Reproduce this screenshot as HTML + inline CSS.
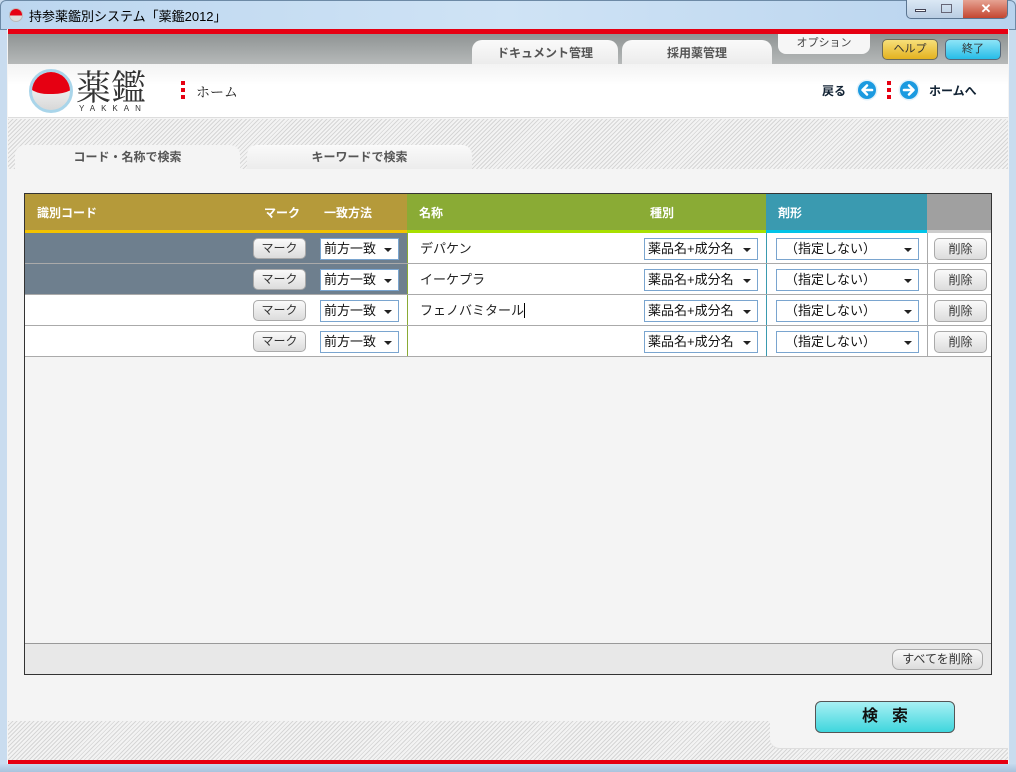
<!DOCTYPE html>
<html><head><meta charset="utf-8"><style>
*{margin:0;padding:0;box-sizing:border-box}
body{width:1016px;height:772px;position:relative;overflow:hidden;font-family:"Liberation Sans","Noto Sans CJK JP",sans-serif;background:#c9dcef}
.a{position:absolute}
.hatch{background:repeating-linear-gradient(135deg,#d6d6d6 0 1px,#f3f3f3 1px 3px)}
.tab{position:absolute;background:linear-gradient(#fafafa,#ececec);border-radius:10px 10px 0 0;font-size:12px;font-weight:bold;color:#555;text-align:center}
.btn{position:absolute;border:1px solid #aaa;border-radius:5px;background:linear-gradient(#fafafa,#dcdcdc);font-size:12px;color:#333;text-align:center}
.sel{position:absolute;background:#fff;border:1px solid #7aa5cf;font-size:13px;color:#111;padding-left:3px;line-height:20px}
.sel:after{content:"";position:absolute;right:6px;top:9px;border:4px solid transparent;border-top:4px solid #222;border-bottom:0}
.hd{position:absolute;top:0;height:36px;color:#fff;font-size:12px;font-weight:bold;line-height:38px}
.row{position:absolute;left:0;width:966px;height:31px;border-bottom:1px solid #aaa}
.nm{position:absolute;left:395px;font-size:13px;color:#222;line-height:30px}
</style></head><body>
<div class="a" style="left:0;top:0;width:1016px;height:30px;background:linear-gradient(90deg,#bcd6ef,#cfe3f5 50%,#b8d3ee);border-radius:6px 6px 0 0;border:1px solid #6d8aa6"></div>
<div class="a" style="left:9px;top:8px;width:14px;height:14px;border-radius:50%;background:linear-gradient(#e60012 55%,#ddd 55%);border:1px solid #bbb"></div>
<div class="a" style="left:29px;top:6px;font-size:13px;color:#000">持参薬鑑別システム「薬鑑2012」</div>
<div class="a" style="left:906px;top:0;width:102px;height:19px;border:1px solid #5b7591;border-top:0;border-radius:0 0 5px 5px;background:linear-gradient(#dbe8f5,#b9cde3);overflow:hidden">
 <div class="a" style="left:8px;top:9px;width:11px;height:3px;background:#fff;border:1px solid #445"></div>
 <div class="a" style="left:34px;top:4px;width:11px;height:9px;border:1px solid #667"></div>
 <div class="a" style="left:56px;top:0;width:46px;height:19px;background:linear-gradient(#e6a393,#c2412b);color:#fff;font-weight:bold;font-size:13px;text-align:center;line-height:18px">✕</div>
</div>
<div class="a" style="left:7px;top:29px;width:1002px;height:737px;background:#f4f4f4"></div>
<div class="a" style="left:8px;top:29px;width:1000px;height:5px;background:#e60012"></div>
<div class="a" style="left:8px;top:34px;width:1000px;height:30px;background:linear-gradient(#8f9494,#b6b9b9)"></div>
<div class="tab" style="left:472px;top:40px;width:146px;height:24px;line-height:26px">ドキュメント管理</div>
<div class="tab" style="left:622px;top:40px;width:150px;height:24px;line-height:26px">採用薬管理</div>
<div class="a" style="left:778px;top:34px;width:92px;height:20px;background:#f6f6f6;border-radius:0 0 8px 8px;font-size:11px;color:#444;text-align:center;line-height:18px">オプション</div>
<div class="a" style="left:882px;top:39px;width:56px;height:21px;border:1px solid #6b6b5a;border-radius:5px;background:linear-gradient(#f7df7a,#e4b220);font-size:11px;text-align:center;line-height:19px;color:#333">ヘルプ</div>
<div class="a" style="left:945px;top:39px;width:56px;height:21px;border:1px solid #56677a;border-radius:5px;background:linear-gradient(#8ee4f7,#27bde8);font-size:11px;text-align:center;line-height:19px;color:#333">終了</div>
<div class="a" style="left:8px;top:64px;width:1000px;height:54px;background:linear-gradient(#f3f3f3,#fff 40%);border-bottom:1px solid #ddd"></div>
<div class="a" style="left:29px;top:69px;width:44px;height:44px;border-radius:50%;border:3px solid #a9d5ea;overflow:hidden;background:linear-gradient(#fff,#d8d8d8)"><div class="a" style="left:-4px;top:-4px;width:50px;height:26px;background:#e60012;border-radius:0 0 50% 40%"></div></div>
<div class="a" style="left:76px;top:66px;font-family:'Noto Serif CJK SC',serif;font-size:35px;line-height:40px;color:#333">薬鑑</div>
<div class="a" style="left:79px;top:104px;font-size:8px;letter-spacing:6px;color:#333">YAKKAN</div>
<div class="a" style="left:181px;top:81px;width:4px;height:18px;background:repeating-linear-gradient(#e60012 0 4px,transparent 4px 7px)"></div>
<div class="a" style="left:196px;top:82px;font-size:14px;color:#222;font-family:'Noto Serif CJK SC',serif">ホーム</div>
<div class="a" style="left:822px;top:82px;font-size:12px;font-weight:bold;color:#123">戻る</div>
<svg class="a" style="left:856px;top:79px" width="22" height="22" viewBox="0 0 22 22"><circle cx="11" cy="11" r="10.5" fill="#e2f1fa"/><circle cx="11" cy="11" r="9" fill="#1b9ae0"/><path d="M16 11H7M11 6.5L6.5 11L11 15.5" stroke="#fff" stroke-width="2.6" fill="none" stroke-linecap="round" stroke-linejoin="round"/></svg>
<div class="a" style="left:887px;top:81px;width:4px;height:18px;background:repeating-linear-gradient(#e60012 0 4px,transparent 4px 7px)"></div>
<svg class="a" style="left:898px;top:79px" width="22" height="22" viewBox="0 0 22 22"><circle cx="11" cy="11" r="10.5" fill="#e2f1fa"/><circle cx="11" cy="11" r="9" fill="#1b9ae0"/><path d="M6 11H15M11 6.5L15.5 11L11 15.5" stroke="#fff" stroke-width="2.6" fill="none" stroke-linecap="round" stroke-linejoin="round"/></svg>
<div class="a" style="left:929px;top:82px;font-size:12px;font-weight:bold;color:#123">ホームへ</div>
<div class="a hatch" style="left:8px;top:119px;width:1000px;height:50px"></div>
<div class="tab" style="left:15px;top:145px;width:225px;height:26px;line-height:24px;background:#f4f4f4">コード・名称で検索</div>
<div class="tab" style="left:247px;top:145px;width:225px;height:24px;line-height:24px">キーワードで検索</div>
<div class="a hatch" style="left:8px;top:721px;width:1000px;height:39px"></div>
<div class="a" style="left:770px;top:700px;width:238px;height:49px;background:#f4f4f4;border-radius:0 0 0 10px;border-bottom:1px solid #ddd"></div>
<div class="a" style="left:8px;top:760px;width:1000px;height:4px;background:#e60012"></div>
<div class="a" style="left:0;top:764px;width:1016px;height:8px;background:linear-gradient(#c5daee,#a9c3dd)"></div>
<div class="a" style="left:24px;top:193px;width:968px;height:482px;border:1px solid #333;background:#f4f4f4">
 <div class="hd" style="left:0;width:382px;background:#b59a3a;border-bottom:3px solid #f2c200;height:39px"><span class="a" style="left:12px">識別コード</span><span class="a" style="left:239px">マーク</span><span class="a" style="left:299px">一致方法</span></div>
 <div class="hd" style="left:382px;width:359px;background:#8aab35;border-bottom:3px solid #a8e000;height:39px"><span class="a" style="left:12px">名称</span><span class="a" style="left:243px">種別</span></div>
 <div class="hd" style="left:741px;width:161px;background:#3a9ab0;border-bottom:3px solid #00c4e8;height:39px"><span class="a" style="left:12px">剤形</span></div>
 <div class="hd" style="left:902px;width:64px;background:#a0a0a0;border-bottom:3px solid #ccc;height:39px"></div>
 <div class="a" style="left:0;top:39px;width:966px;height:124px;background:#fff"></div>
 <div class="a" style="left:0;top:39px;width:382px;height:62px;background:#6e7f8e"></div>
 <div class="a" style="left:382px;top:39px;width:1px;height:124px;background:#8aab35"></div>
 <div class="a" style="left:741px;top:39px;width:1px;height:124px;background:#3a9ab0"></div>
 <div class="a" style="left:902px;top:39px;width:1px;height:124px;background:#aaa"></div>
 <div class="row" style="top:39px"></div><div class="row" style="top:70px"></div><div class="row" style="top:101px"></div><div class="row" style="top:132px"></div>
 <div class="btn" style="left:228px;top:44px;width:53px;height:21px;line-height:19px">マーク</div>
 <div class="btn" style="left:228px;top:75px;width:53px;height:21px;line-height:19px">マーク</div>
 <div class="btn" style="left:228px;top:106px;width:53px;height:21px;line-height:19px">マーク</div>
 <div class="btn" style="left:228px;top:137px;width:53px;height:21px;line-height:19px">マーク</div>
 <div class="sel" style="left:295px;top:44px;width:79px;height:22px">前方一致</div>
 <div class="sel" style="left:295px;top:75px;width:79px;height:22px">前方一致</div>
 <div class="sel" style="left:295px;top:106px;width:79px;height:22px">前方一致</div>
 <div class="sel" style="left:295px;top:137px;width:79px;height:22px">前方一致</div>
 <div class="nm" style="top:40px">デパケン</div>
 <div class="nm" style="top:71px">イーケプラ</div>
 <div class="nm" style="top:102px">フェノバミタール<span style="border-right:1px solid #000"></span></div>
 <div class="sel" style="left:619px;top:44px;width:114px;height:22px">薬品名+成分名</div>
 <div class="sel" style="left:619px;top:75px;width:114px;height:22px">薬品名+成分名</div>
 <div class="sel" style="left:619px;top:106px;width:114px;height:22px">薬品名+成分名</div>
 <div class="sel" style="left:619px;top:137px;width:114px;height:22px">薬品名+成分名</div>
 <div class="sel" style="left:751px;top:44px;width:143px;height:22px;padding-left:8px">（指定しない）</div>
 <div class="sel" style="left:751px;top:75px;width:143px;height:22px;padding-left:8px">（指定しない）</div>
 <div class="sel" style="left:751px;top:106px;width:143px;height:22px;padding-left:8px">（指定しない）</div>
 <div class="sel" style="left:751px;top:137px;width:143px;height:22px;padding-left:8px">（指定しない）</div>
 <div class="btn" style="left:909px;top:44px;width:53px;height:22px;line-height:20px">削除</div>
 <div class="btn" style="left:909px;top:75px;width:53px;height:22px;line-height:20px">削除</div>
 <div class="btn" style="left:909px;top:106px;width:53px;height:22px;line-height:20px">削除</div>
 <div class="btn" style="left:909px;top:137px;width:53px;height:22px;line-height:20px">削除</div>
 <div class="a" style="left:0;top:449px;width:966px;height:31px;background:#e8e8e8;border-top:1px solid #999"></div>
 <div class="btn" style="left:867px;top:455px;width:91px;height:21px;line-height:19px;border-radius:7px">すべてを削除</div>
</div>
<div class="a" style="left:815px;top:701px;width:140px;height:32px;border:1px solid #555;border-radius:6px;background:linear-gradient(#a8f0f4,#3fd6dd);font-size:16px;font-weight:bold;color:#111;text-align:center;line-height:30px;letter-spacing:14px;padding-left:14px">検索</div>
</body></html>
